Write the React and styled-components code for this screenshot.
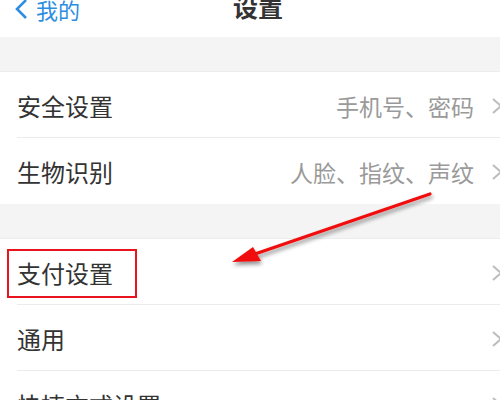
import React from "react";
import styled, { createGlobalStyle } from "styled-components";

const Global = createGlobalStyle`
  html, body { margin: 0; padding: 0; background: #fff; }
  body { font-family: "Noto Sans CJK SC", "Noto Sans", sans-serif; }
`;

const Page = styled.div`
  position: relative;
  width: 500px;
  height: 400px;
  overflow: hidden;
  background: #fff;
`;

const NavBar = styled.div`
  position: relative;
  height: 37px;
  display: flex;
  align-items: center;
  justify-content: center;
  padding-bottom: 25px;
  box-sizing: border-box;
`;

const Back = styled.div`
  position: absolute;
  left: 14px;
  top: -6px;
  display: flex;
  align-items: center;
  gap: 8px;
  color: #2d8ee0;
  font-size: 22px;
  line-height: 30px;
`;

const Title = styled.div`
  font-size: 25px;
  font-weight: 700;
  color: #333;
  line-height: 25px;
  margin-left: 16px;
`;

const Band = styled.div`
  height: 35px;
  background: #f4f4f4;
  border-bottom: 1px solid #ececec;
  box-sizing: border-box;
`;

const Group = styled.div`
  background: #fff;
`;

const Row = styled.div`
  height: 66px;
  display: flex;
  align-items: center;
  margin-left: 17px;
  border-bottom: ${(p) => (p.$last ? "none" : "1px solid #ececec")};
  box-sizing: border-box;
  padding-top: 2px;
`;

const Label = styled.div`
  flex: 1;
  font-size: 24px;
  color: #333;
  line-height: 30px;
`;

const Value = styled.div`
  font-size: 23px;
  color: #9a9a9a;
  line-height: 30px;
  margin-right: 17px;
`;

const Chevron = styled.svg`
  flex: none;
  width: 12px;
  height: 18px;
  margin-right: -3px;
`;

const Highlight = styled.div`
  position: absolute;
  left: 7px;
  top: 249px;
  width: 130px;
  height: 49px;
  border: 2px solid #e8141e;
  box-sizing: border-box;
`;

const Overlay = styled.svg`
  position: absolute;
  left: 0;
  top: 0;
  width: 500px;
  height: 400px;
  pointer-events: none;
`;

const ChevronIcon = () => (
  <Chevron viewBox="0 0 12 18">
    <path d="M2 2 L10 9 L2 16" fill="none" stroke="#bdbdbd" strokeWidth="2" />
  </Chevron>
);

const Item = ({ label, value, last }) => (
  <Row $last={last}>
    <Label>{label}</Label>
    {value && <Value>{value}</Value>}
    <ChevronIcon />
  </Row>
);

export default function App() {
  return (
    <>
      <Global />
      <Page>
        <NavBar>
          <Back>
            <svg width="14" height="22" viewBox="0 0 14 22">
              <path d="M12 2 L3 11 L12 20" fill="none" stroke="#2d8ee0" strokeWidth="2.6" />
            </svg>
            <span>我的</span>
          </Back>
          <Title>设置</Title>
        </NavBar>
        <Band />
        <Group>
          <Item label="安全设置" value="手机号、密码" />
          <Item label="生物识别" value="人脸、指纹、声纹" last />
        </Group>
        <Band />
        <Group>
          <Item label="支付设置" />
          <Item label="通用" />
          <Item label="快捷方式设置" last />
        </Group>
        <Highlight />
        <Overlay viewBox="0 0 500 400">
          <defs>
            <filter id="sh" x="-20%" y="-50%" width="140%" height="200%">
              <feGaussianBlur in="SourceAlpha" stdDeviation="2" />
              <feOffset dx="1" dy="3" result="b" />
              <feComponentTransfer>
                <feFuncA type="linear" slope="0.45" />
              </feComponentTransfer>
              <feMerge>
                <feMergeNode />
                <feMergeNode in="SourceGraphic" />
              </feMerge>
            </filter>
          </defs>
          <g filter="url(#sh)">
            <line x1="430" y1="194" x2="252" y2="255" stroke="#f01010" strokeWidth="3.2" strokeLinecap="round" />
            <polygon points="232,262 253,247 261,261" fill="#f01010" />
          </g>
        </Overlay>
      </Page>
    </>
  );
}
